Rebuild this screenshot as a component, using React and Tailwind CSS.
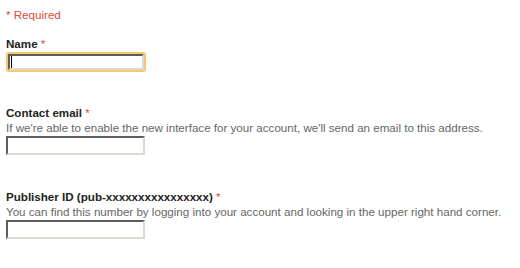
import React from "react";

const Field = ({ label, help, focused, className }) => (
  <div className={className}>
    <div className="font-bold text-[#222] leading-[15px]">
      {label} <span className="font-normal text-[#dd4b39]">*</span>
    </div>
    {help && <div className="text-[#666] leading-[15px]">{help}</div>}
    <div className={focused ? "mt-[1px] w-[140px] rounded-[3px] bg-[#f3c96f] p-[2px] relative" : "mt-[1px] w-[139px] relative"}>
      <input
        readOnly
        className={
          "block bg-white border-2 border-t-[#5e5e5e] border-l-[#5e5e5e] border-r-[#dedad2] border-b-[#dedad2] outline-none " +
          (focused ? "w-[136px] h-[16px]" : "w-[139px] h-[19px]")
        }
      />
      {focused && <span className="absolute left-[5px] top-[4px] w-[1px] h-[12px] bg-black" />}
    </div>
  </div>
);

export default function App() {
  return (
    <div className="bg-white min-h-screen pl-[6px] pt-[7px] text-[11.6px]" style={{ fontFamily: '"Liberation Sans", Arial, sans-serif' }}>
      <div className="text-[#dd4b39] leading-[15px]">* Required</div>
      <Field className="mt-[14px]" label="Name" focused />
      <Field
        className="mt-[33px]"
        label="Contact email"
        help="If we're able to enable the new interface for your account, we'll send an email to this address."
      />
      <Field
        className="mt-[34px]"
        label="Publisher ID (pub-xxxxxxxxxxxxxxxx)"
        help="You can find this number by logging into your account and looking in the upper right hand corner."
      />
    </div>
  );
}
